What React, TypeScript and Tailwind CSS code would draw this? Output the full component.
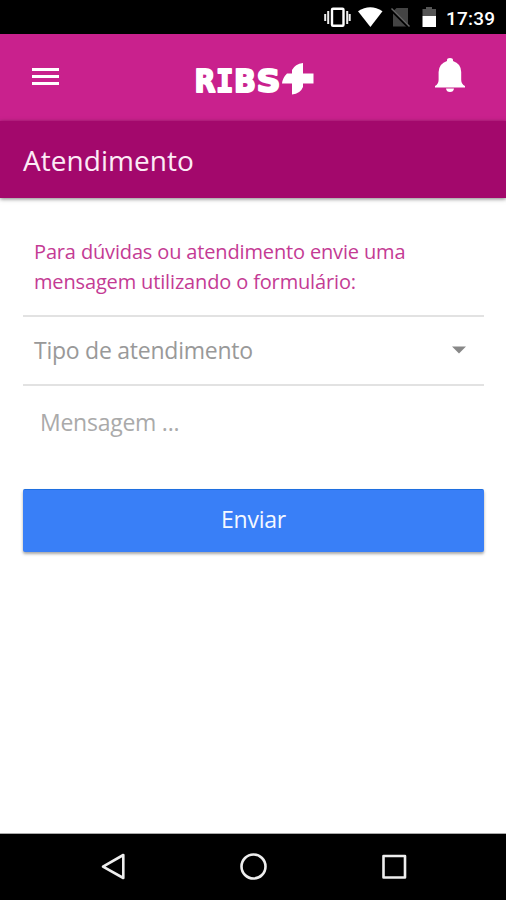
function StatusBar() {
  return (
    <div className="flex h-[34px] shrink-0 items-center justify-end bg-black pr-[11px] text-white">
      <svg className="h-[34px] w-[122px]" viewBox="322 0 122 34" fill="none">
        <rect x="332" y="8.8" width="11.5" height="17" rx="1" stroke="#fff" strokeWidth="2.4" />
        <path d="M328.2 11v13M325.2 14v7M347.2 11v13M349.7 14v7" stroke="#eee" strokeWidth="2" />
        <path d="M358 11.3Q370.3 3.3 382.5 11.3L370.4 27Z" fill="#fff" />
        <path d="M396.5 8H408V26.5H393V11.5Z" fill="#444" />
        <path d="M391 9.5L409 27.5" stroke="#000" strokeWidth="3" />
        <path d="M391.5 8.5L409.5 26.5" stroke="#666" strokeWidth="1.4" />
        <path d="M426 7H432V9H436V16H422.5V9H426Z" fill="#555" />
        <rect x="422.5" y="16" width="13.5" height="11" fill="#fff" />
      </svg>
      <span className="mt-0.5 ml-[2px] w-[49px] text-[19px] leading-none font-medium tracking-[0.2px] whitespace-nowrap">17:39</span>
    </div>
  );
}

function Header() {
  return (
    <header className="flex h-[87px] shrink-0 items-center bg-[#c9218d] pr-[40px] pl-[32px]">
      <button aria-label="Menu" className="mb-[3px] flex w-[27px] flex-col gap-[4px]">
        <span className="h-[3px] bg-white" />
        <span className="h-[3px] bg-white" />
        <span className="h-[3px] bg-white" />
      </button>
      <svg className="ml-[131px] h-[60px] w-[128px] overflow-visible" viewBox="190 47 128 60" fill="#fff" role="img" aria-label="RIBS+">
        <g stroke="#fff" strokeWidth="2" strokeLinejoin="round" fontSize="32.5" fontWeight="700" fontFamily="'DejaVu Sans', sans-serif">
          <text x="194.5" y="91.4" textLength="21" lengthAdjust="spacingAndGlyphs">R</text>
          <text x="216" y="91.4" textLength="17.5" lengthAdjust="spacingAndGlyphs" fontFamily="'DejaVu Sans Mono', monospace">I</text>
          <text x="234" y="91.4" textLength="22" lengthAdjust="spacingAndGlyphs">B</text>
          <text x="256.5" y="91.4" textLength="24" lengthAdjust="spacingAndGlyphs">S</text>
        </g>
        <path d="M292 72.5V69Q295 63 303 62V72.5H313.5V82.5H303V86Q300.5 92.5 292 93.5V82.5H282Q282.5 77 287 72.5Z" />
      </svg>
      <svg className="mb-[5px] ml-auto h-[36px] w-[32px]" viewBox="434 57 32 36" fill="#fff">
        <path d="M447 60Q447 58 450 58Q453 58 453 60V61Q461 63.5 461.2 72V80Q461.3 84 465 86V87.5H435V86Q438.5 84 438.6 80V72Q439 63.5 447 61Z" />
        <path d="M446 88.5H454Q453.5 92 450 92T446 88.5Z" />
      </svg>
    </header>
  );
}

export default function App() {
  return (
    <div className="flex h-[900px] w-[506px] flex-col overflow-hidden bg-white font-['Open_Sans','Noto_Sans',sans-serif]">
      <div className="contents font-[Roboto,sans-serif]">
        <StatusBar />
      </div>
      <Header />
      <div className="relative flex h-[77px] shrink-0 items-center bg-[#a3086c] pl-[23px] shadow-[0_1px_4px_rgba(0,0,0,0.5)]">
        <h1 className="text-[28px] leading-[38px] tracking-[0.05px] whitespace-nowrap text-[#fcebf6]">Atendimento</h1>
      </div>
      <main className="flex flex-1 flex-col pt-[39px] pr-[22px] pl-[23px]">
        <p className="h-[78px] pl-[11px] text-[20px] leading-[30px] tracking-[-0.15px] whitespace-nowrap text-[#c43b94]">
          <span className="block">Para dúvidas ou atendimento envie uma</span>
          <span className="block">mensagem utilizando o formulário:</span>
        </p>
        <div className="flex h-[71px] items-center justify-between border-y-2 border-[#e2e2e2] pr-[18px] pb-px pl-[11px]">
          <span className="text-[23px] leading-8 tracking-[-0.25px] whitespace-nowrap text-[#999]">Tipo de atendimento</span>
          <svg className="h-[8px] w-[14px]" viewBox="0 0 14 8" fill="#888">
            <path d="M0 .5H14L7 7.5Z" />
          </svg>
        </div>
        <div className="h-[103px] pt-[20px] pl-[17px] text-[23px] leading-8 tracking-[-0.25px] whitespace-nowrap text-[#aaa]">Mensagem ...</div>
        <button className="flex h-[63px] items-center justify-center rounded-[2px] border-t border-[#1f6fe0] bg-[#397ff7] pb-[3px] text-[23px] tracking-[-0.25px] text-[#f4f8ff] shadow-[0_2px_3px_rgba(0,0,0,0.35)]">
          Enviar
        </button>
      </main>
      <nav className="flex h-[67px] shrink-0 items-center border-t border-[#aaa] bg-black">
        <svg className="h-[66px] w-[506px]" viewBox="0 834 506 66" fill="none" stroke="#eee" strokeWidth="2.6" strokeLinejoin="round">
          <path d="M123.3 855V878L103 866.7Z" />
          <circle cx="253.5" cy="866.5" r="12" />
          <rect x="383.5" y="856" width="21.5" height="21.5" />
        </svg>
      </nav>
    </div>
  );
}
